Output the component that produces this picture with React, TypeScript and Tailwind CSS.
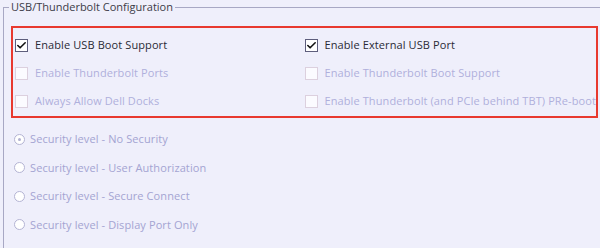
import { Check } from "lucide-react";

const font = { fontFamily: '"Open Sans", "Liberation Sans", sans-serif' };

function Box({ checked, disabled, label }: { checked?: boolean; disabled?: boolean; label: string }) {
  return (
    <div className="flex items-center h-[28px] gap-[7px] whitespace-nowrap">
      <div
        className={
          disabled
            ? "shrink-0 w-[13px] h-[13px] border border-[#dcd0de] bg-[#fbfbff]"
            : "shrink-0 w-[13px] h-[13px] border border-[#5e5e7c] bg-white flex items-center justify-center"
        }
      >
        {checked && <Check className="w-[11px] h-[11px] text-[#111]" strokeWidth={3.5} />}
      </div>
      <span className={disabled ? "text-[#b0b0dc]" : "text-[#2a2a36]"}>{label}</span>
    </div>
  );
}

function Radio({ selected, label }: { selected?: boolean; label: string }) {
  return (
    <div className="flex items-center h-[28.5px] gap-[5px]">
      <div className="shrink-0 w-[11px] h-[11px] rounded-full border border-[#b4b4d4] bg-white flex items-center justify-center">
        {selected && <div className="w-[3px] h-[3px] rounded-full bg-[#b0b0d0]" />}
      </div>
      <span className="text-[#a4a4d2]">{label}</span>
    </div>
  );
}

export default function App() {
  return (
    <div
      className="w-[600px] h-[248px] bg-[#efeffb] overflow-hidden pt-[7px] pl-[3px] text-[11px] tracking-[0.1px]"
      style={font}
    >
      <div className="relative h-[260px] border-l border-t border-[#a8a8c4] pr-[2px]">
        <div className="absolute -top-[8px] left-[5px] px-[2px] bg-[#efeffb] text-[11px] leading-[14px] tracking-normal text-[#3c3c48]">
          USB/Thunderbolt Configuration
        </div>
        <div className="mt-[18px] ml-[7px] border-2 border-[#e8392f] h-[92px] grid grid-cols-2 pt-[3px]">
          <div className="flex flex-col pl-[2px]">
            <Box checked label="Enable USB Boot Support" />
            <Box disabled label="Enable Thunderbolt Ports" />
            <Box disabled label="Always Allow Dell Docks" />
          </div>
          <div className="flex flex-col overflow-hidden">
            <Box checked label="Enable External USB Port" />
            <Box disabled label="Enable Thunderbolt Boot Support" />
            <Box disabled label="Enable Thunderbolt (and PCIe behind TBT) PRe-boot" />
          </div>
        </div>
        <div className="flex flex-col pl-[10px] pt-[7px]">
          <Radio selected label="Security level - No Security" />
          <Radio label="Security level - User Authorization" />
          <Radio label="Security level - Secure Connect" />
          <Radio label="Security level - Display Port Only" />
        </div>
      </div>
    </div>
  );
}
